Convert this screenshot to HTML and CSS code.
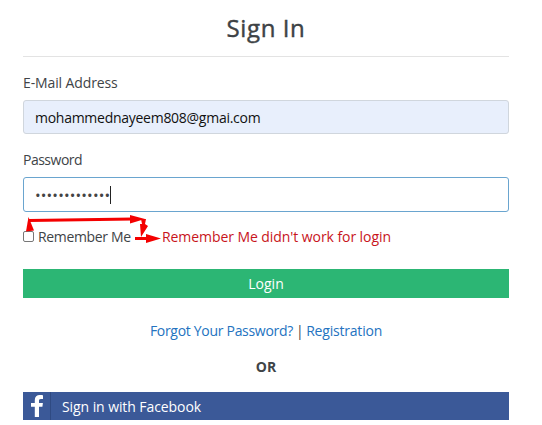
FILE: index.html
```html
<!DOCTYPE html>
<html lang="en">
<head>
<meta charset="utf-8">
<title>Sign In</title>
<link rel="stylesheet" href="styles.css">
</head>
<body>
<main class="login">
  <h1 class="title">Sign In</h1>
  <div class="field">
    <div class="label">E-Mail Address</div>
    <div class="control filled"><span class="email">mohammednayeem808@gmai.com</span></div>
  </div>
  <div class="field">
    <div class="label password-label">Password</div>
    <div class="control focused"><span class="dots">•••••••••••••</span><i class="caret"></i></div>
  </div>
  <div class="remember">
    <i class="checkbox"></i>
    <span class="remember-text">Remember Me</span>
    <span class="note">Remember Me didn't work for login</span>
    <svg class="arrows" width="146" height="34" viewBox="0 0 146 34" fill="#f40000">
      <path d="M5.500 2 L11 15.500 L3 16.500 Z"/>
      <path d="M6 5.500 L110 4" stroke="#f40000" stroke-width="3"/>
      <path d="M107 0 L122 4 L107 8.500 Z"/>
      <path d="M118 4 L123 4 L122 9 L125 11 L118 22 L117 9 L119 9 Z"/>
      <path d="M112 23.500 H124" stroke="#f40000" stroke-width="3"/>
      <path d="M123 19 L138 23.500 L123 28 Z"/>
    </svg>
  </div>
  <div class="btn-login">Login</div>
  <div class="links"><a class="forgot">Forgot Your Password?</a><span class="bar">|</span><a class="reg">Registration</a></div>
  <div class="or">OR</div>
  <div class="btn-fb">
    <span class="fb-icon"><svg width="12" height="22" viewBox="0 0 12 22"><path fill="#fff" d="M12 .3V4H9.900C8.300 4 8 4.700 8 5.800V8h3.900l-.5 3.800H8V22H3.800V11.800H0V8h3.800V5C3.800 1.800 5.800 0 8.800 0 10.200 0 11.500.1 12 .3z"/></svg></span>
    <span class="fb-text">Sign in with Facebook</span>
  </div>
</main>
</body>
</html>
```
FILE: styles.css
```css
* { box-sizing: border-box; }
body {
  margin: 0;
  background: #fff;
  color: #404447;
  font: 14px/20px "Open Sans", "Noto Sans", sans-serif;
  overflow: hidden;
}
span, a { white-space: nowrap; }
.login { width: 486px; margin-left: 23px; padding-top: 12px; }
.title {
  height: 45px;
  margin: 0 0 16px;
  border-bottom: 1px solid #e3e3e3;
  font-size: 24px;
  font-weight: 500;
  line-height: 32px;
  letter-spacing: 0.6px;
  text-align: center;
  -webkit-text-stroke: 0.4px #373b3e;
}
.field { margin-bottom: 15px; }
.label { height: 20px; margin-bottom: 7px; letter-spacing: -0.12px; }
.password-label { line-height: 19px; letter-spacing: -0.5px; }
.control {
  height: 34px;
  display: flex;
  align-items: center;
  padding: 1px 11px 0;
  border: 1px solid #d0d6dd;
  border-radius: 3px;
}
.filled { margin-bottom: 16px; background: #e8effc; color: #111; }
.email { letter-spacing: -0.27px; }
.focused { height: 35px; border-color: #6aa5cf; }
.dots { font-size: 15px; letter-spacing: 0.15px; color: #444; }
.caret { width: 1px; height: 18px; background: #222; }
.remember {
  position: relative;
  height: 20px;
  display: flex;
  align-items: center;
}
.checkbox {
  width: 11px;
  height: 11px;
  margin: 0 4px 2px 0;
  border: 1px solid #777;
  border-radius: 2px;
}
.remember-text { width: 93px; letter-spacing: -0.35px; }
.note { margin-left: 31px; color: #c8141c; letter-spacing: -0.07px; }
.arrows { position: absolute; left: 0; top: -12px; }
.btn-login {
  height: 29px;
  margin-top: 22px;
  background: #2cb674;
  color: #fff;
  line-height: 30px;
  text-align: center;
}
.links { height: 20px; margin-top: 23px; text-align: center; }
.links a { color: #2473bf; }
.forgot { letter-spacing: -0.3px; }
.reg { letter-spacing: -0.2px; }
.bar { margin: 0 2.5px 0 3px; }
.or { margin-top: 16px; font-weight: 700; text-align: center; }
.btn-fb {
  height: 28px;
  display: flex;
  margin-top: 15px;
  background: #3b5998;
  color: #fff;
  line-height: 30px;
}
.fb-icon {
  width: 28px;
  display: flex;
  justify-content: center;
  padding-top: 3px;
  border-right: 1px solid #2f4a82;
}
.fb-text { margin-left: 11px; letter-spacing: -0.08px; }
```
